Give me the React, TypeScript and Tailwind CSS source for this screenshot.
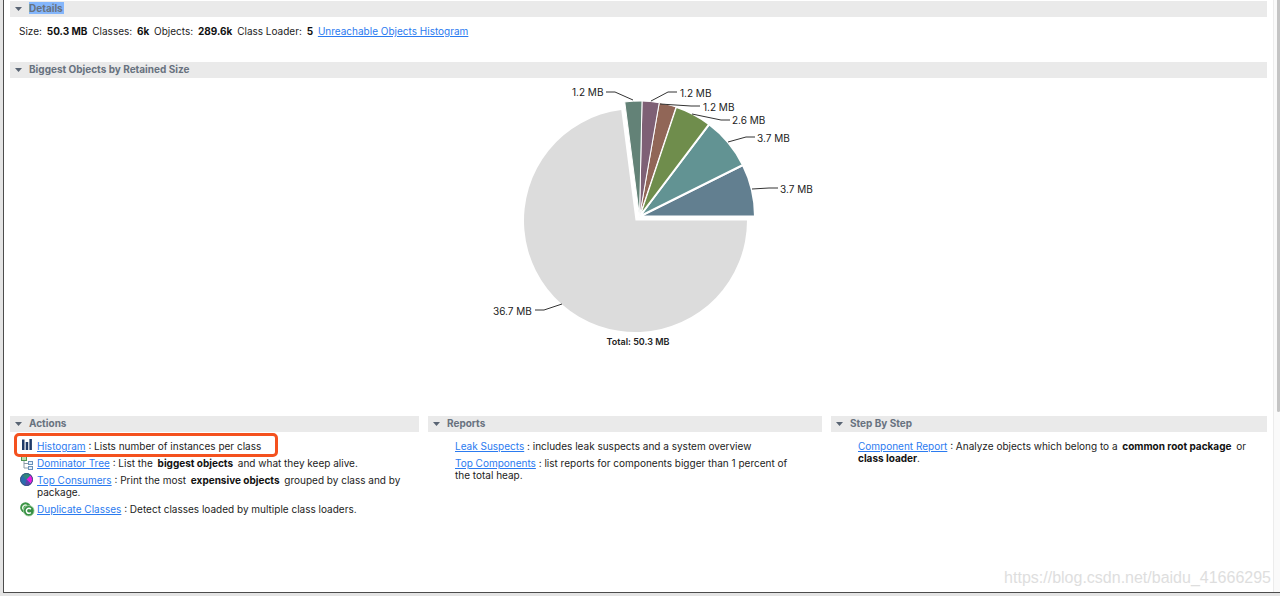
import type { ReactNode } from "react";

const SLICES = [
  { size: 3.7, color: "#627f90", edge: 2 },
  { size: 3.7, color: "#629393", edge: 2 },
  { size: 2.6, color: "#6f8d4c", edge: 2 },
  { size: 1.2, color: "#916657", edge: 1 },
  { size: 1.2, color: "#7e6075", edge: 1 },
  { size: 1.2, color: "#638277", edge: 1 },
];
const TOTAL = 50.3;

const LABELS = [
  { text: "1.2 MB", x: 92, y: 16, line: "126,12 135,12 153,20" },
  { text: "1.2 MB", x: 200, y: 17, line: "197,12 188,12 171,21" },
  { text: "1.2 MB", x: 223, y: 31, line: "220,26 211,26 180,24" },
  { text: "2.6 MB", x: 252, y: 44, line: "250,40 241,40 212,34" },
  { text: "3.7 MB", x: 277, y: 62, line: "275,57 266,57 248,62" },
  { text: "3.7 MB", x: 300, y: 113, line: "298,108 289,108 272,109" },
  { text: "36.7 MB", x: 13, y: 235, line: "55,230 64,230 82,224" },
];

// angles in degrees, counter-clockwise from the positive x axis
function wedge(cx: number, cy: number, r: number, from: number, to: number) {
  const point = (deg: number) => {
    const rad = (deg * Math.PI) / 180;
    return `${(cx + r * Math.cos(rad)).toFixed(2)} ${(cy - r * Math.sin(rad)).toFixed(2)}`;
  };
  const large = to - from > 180 ? 1 : 0;
  return `M${cx} ${cy}L${point(from)}A${r} ${r} 0 ${large} 0 ${point(to)}Z`;
}

export default function App() {
  return (
    <div className="flex min-h-screen flex-col bg-[#e4e4e4] pb-[3px] pl-[3px] font-['Inter',sans-serif] text-[10px] leading-3 text-[#1c1c1c]">
      <div className="relative flex grow border-b border-l border-[#4c4c4c] bg-white">
        <main className="min-w-0 grow pt-px pr-[6px] pl-[6px]">
          <SectionTitle title="Details" selected />
          <p className="px-[9px] pt-2 pb-[25px]">
            Size: <Strong>50.3 MB</Strong> Classes: <Strong>6k</Strong> Objects:{" "}
            <Strong>289.6k</Strong> Class Loader: <Strong>5</Strong>{" "}
            <Link>Unreachable Objects Histogram</Link>
          </p>

          <SectionTitle title="Biggest Objects by Retained Size" />
          <div className="flex justify-center pt-[2px] pb-[66px] pl-[43px]">
            <RetainedSizePie />
          </div>

          <div className="grid grid-cols-[409fr_394fr_436fr] gap-[9px]">
            <section>
              <SectionTitle title="Actions" />
              <ul className="space-y-[5px] px-[10px] pt-2">
                <Action icon={<HistogramIcon />} marked>
                  <Link>Histogram</Link> : Lists number of instances per class
                </Action>
                <Action icon={<TreeIcon />}>
                  <Link>Dominator Tree</Link> : List the <Strong>biggest objects</Strong> and what they keep alive.
                </Action>
                <Action icon={<ConsumersIcon />}>
                  <Link>Top Consumers</Link> : Print the most <Strong>expensive objects</Strong> grouped by class and by package.
                </Action>
                <Action icon={<DuplicateIcon />}>
                  <Link>Duplicate Classes</Link> : Detect classes loaded by multiple class loaders.
                </Action>
              </ul>
            </section>

            <section>
              <SectionTitle title="Reports" />
              <ul className="space-y-[5px] pt-2 pr-[20px] pl-[27px]">
                <li>
                  <Link>Leak Suspects</Link> : includes leak suspects and a system overview
                </li>
                <li>
                  <Link>Top Components</Link> : list reports for components bigger than 1 percent of the total heap.
                </li>
              </ul>
            </section>

            <section>
              <SectionTitle title="Step By Step" />
              <ul className="pt-2 pr-[10px] pl-[27px]">
                <li>
                  <Link>Component Report</Link> : Analyze objects which belong to a <Strong>common root package</Strong> or{" "}
                  <b className="font-bold text-[#111]">class loader</b>.
                </li>
              </ul>
            </section>
          </div>
        </main>

        {/* Scrollbar */}
        <div className="w-[7px] shrink-0 border-l border-[#ececec] bg-[#fafafa] pl-[3px]">
          <div className="h-[412px] rounded-b-sm bg-[#c4c4c4]" />
        </div>

        <div className="absolute right-[9px] bottom-1 font-['Liberation_Sans',sans-serif] text-[16px] leading-5 text-[#dedede]">
          https://blog.csdn.net/baidu_41666295
        </div>
      </div>
    </div>
  );
}

function SectionTitle({ title, selected = false }: { title: string; selected?: boolean }) {
  return (
    <h2>
      <button
        type="button"
        className="flex h-4 w-full items-center gap-[7px] bg-[#eaeaea] pb-[2px] pl-[5px] text-left font-bold text-[#68727f]"
      >
        <svg width="7" height="4" viewBox="0 0 7 4" className="mt-px" aria-hidden="true">
          <path d="M0 0H7L3.5 4Z" fill="#596473" />
        </svg>
        <span className={selected ? "bg-[#84b6fb] pr-px" : ""}>{title}</span>
      </button>
    </h2>
  );
}

function Strong({ children }: { children: ReactNode }) {
  return <b className="mx-[2px] font-bold text-[#111]">{children}</b>;
}

function Link({ children }: { children: ReactNode }) {
  return (
    <a href="#" className="text-[#2b7bf0] underline">
      {children}
    </a>
  );
}

function Action({ icon, marked = false, children }: { icon: ReactNode; marked?: boolean; children: ReactNode }) {
  return (
    <li className="relative flex w-fit gap-[3px]">
      <span className="-mt-px -mb-[3px] w-[14px] shrink-0">{icon}</span>
      <div>{children}</div>
      {marked && (
        <div className="absolute -top-[7px] -right-[17px] -bottom-[5px] -left-[6px] z-10 rounded-[5px] border-3 border-[#f4511e]" />
      )}
    </li>
  );
}

function RetainedSizePie() {
  let angle = 0;
  const wedges = SLICES.map((s) => {
    const from = angle;
    angle += (s.size / TOTAL) * 360;
    return { ...s, d: wedge(159.5, 136.5, 115.5, from, angle) };
  });

  return (
    <svg width="360" height="270" viewBox="0 0 360 270" role="img" aria-label="Biggest objects by retained size">
      <path d={wedge(155.5, 140.5, 111.5, angle, 360)} fill="#dcdcdc" />
      {wedges.map((w, i) => (
        <path key={i} d={w.d} fill={w.color} stroke="#fff" strokeWidth={w.edge} />
      ))}
      {LABELS.map((l, i) => (
        <g key={i}>
          <polyline points={l.line} fill="none" stroke="#333" />
          <text x={l.x} y={l.y} fontSize="10" fill="#222">
            {l.text}
          </text>
        </g>
      ))}
      <text x="158" y="265" textAnchor="middle" fontSize="9" fontWeight="600" fill="#222">
        Total: 50.3 MB
      </text>
    </svg>
  );
}

function HistogramIcon() {
  return (
    <svg width="14" height="14" viewBox="0 0 14 14" aria-hidden="true">
      <path d="M2 .5h2.500v10.500H2zM5.700 3h2.500v8H5.700zM9.400 0h2.500v11H9.400z" fill="#1f3a68" />
    </svg>
  );
}

function TreeIcon() {
  return (
    <svg width="14" height="14" viewBox="0 0 14 14" fill="none" aria-hidden="true">
      <path d="M4 4v8h4M4 7.500h4" stroke="#8a9aa6" />
      <rect x="1.500" y=".5" width="5" height="4" fill="#b9dcae" stroke="#4f9553" />
      <rect x="8.500" y="5.500" width="4" height="3" fill="#e3eef9" stroke="#6b91b8" />
      <rect x="8.500" y="10.500" width="4" height="3" fill="#e3eef9" stroke="#6b91b8" />
    </svg>
  );
}

function ConsumersIcon() {
  return (
    <svg width="14" height="14" viewBox="0 0 14 14" aria-hidden="true">
      <circle cx="6.500" cy="6.500" r="6.300" fill="#2c6cae" />
      <path d="M6.500 6.500L2 2.100A6.300 6.300 0 0 1 11 2.100Z" fill="#30877d" />
      <path d="M6.500 6.500L11 2.100A6.300 6.300 0 0 1 11 10.900Z" fill="#f019e4" />
      <path d="M6.500 6.500L11 10.900A6.300 6.300 0 0 1 5 12.600Z" fill="#5a45a8" />
      <circle cx="6.500" cy="6.500" r="6" fill="none" stroke="#35577d" />
    </svg>
  );
}

function DuplicateIcon() {
  return (
    <svg width="15" height="15" viewBox="0 0 15 15" fill="none" aria-hidden="true">
      <circle cx="5.500" cy="5.500" r="5.300" fill="#3c9446" />
      <path d="M7 3.500A2.600 2.600 0 1 0 4 8" stroke="#e6f5e4" strokeWidth="1.400" />
      <circle cx="8.800" cy="8.800" r="5.300" fill="#369044" stroke="#a9d6a7" strokeWidth=".8" />
      <path d="M10.800 7.200A2.500 2.500 0 1 0 10.800 10.400" stroke="#fff" strokeWidth="1.500" />
    </svg>
  );
}
